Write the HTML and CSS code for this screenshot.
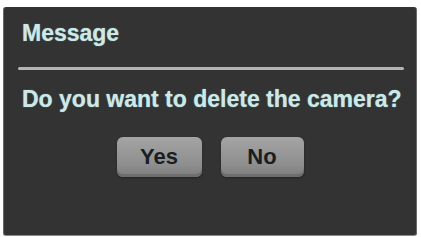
FILE: index.html
```html
<!doctype html>
<html lang="en">
<head>
    <meta charset="UTF-8">
    <title>Message</title>
    <link rel="stylesheet" href="styles.css">
</head>
<body>
    <div class="dialog">
        <div class="title">Message</div>
        <div class="rule"></div>
        <p class="question">Do you want to delete the camera?</p>
        <div class="buttons">
            <a href="#" class="btn btn-yes">Yes</a>
            <a href="#" class="btn btn-no">No</a>
        </div>
    </div>
</body>
</html>
```

FILE: styles.css
```css
/*reset*/
*{
    margin:0;
    padding:0;
}
a{
    text-decoration:none;
}
body{
    background: #ffffff;
    font-family: "Liberation Sans", Arial, sans-serif;
}

.dialog{
    box-sizing: border-box;
    margin: 7px 4px 0 3px;
    width: 414px;
    height: 229px;
    padding-top: 13px;
    background: #333333;
    border-radius: 3px;
    border-left: 1px solid #6a6a6a;
    border-right: 1px solid #6a6a6a;
    border-bottom: 1px solid #8a8a8a;
}
.title,
.question{
    font-size: 23px;
    font-weight: bold;
    line-height: 26px;
    color: #cde8e6;
    text-shadow: 0 0 1px #7fb8b4;
}
.title{
    padding-left: 18px;
}
.rule{
    height: 3px;
    margin: 21px 12px 0 14px;
    background: #b4b4b4;
    border-radius: 2px;
}
.question{
    margin-top: 16px;
    padding-left: 18px;
}
.buttons{
    display: flex;
    justify-content: center;
    gap: 19px;
    margin-top: 25px;
}
.btn{
    display: block;
    height: 40px;
    line-height: 40px;
    text-align: center;
    font-size: 22px;
    font-weight: bold;
    color: #1a1e22;
    border-radius: 6px;
    background: linear-gradient(#a4a4a4, #8e8e8e 70%, #7c7c7c);
    box-shadow: inset 0 -3px 0 #6e6e6e, 0 1px 2px #222222;
}
.btn-yes{
    width: 85px;
}
.btn-no{
    width: 83px;
}
```
